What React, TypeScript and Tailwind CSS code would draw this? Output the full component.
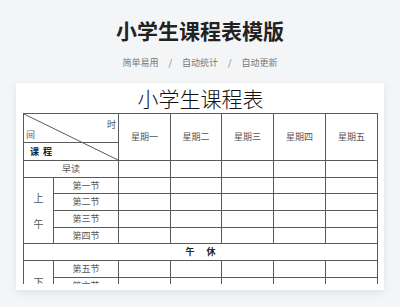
const days = ['星期一', '星期二', '星期三', '星期四', '星期五']

const Blank = () => (
  <>
    {days.map((d) => (
      <div key={d} className="border-r border-b border-[#5a5a5a]" />
    ))}
  </>
)

const App = () => {
  const morning = ['第一节', '第二节', '第三节', '第四节']
  const afternoon = ['第五节', '第六节']

  return (
    <div
      className="w-[400px] h-[307px] overflow-hidden bg-[#f4f5f7] flex flex-col items-center"
      style={{ fontFamily: '"Noto Sans CJK SC", "Noto Sans", sans-serif' }}
    >
      <h1 className="mt-[19px] text-[21px] leading-[22px] font-bold text-[#222]">
        小学生课程表模版
      </h1>
      <div className="mt-[17px] flex items-center gap-[10px] text-[9px] leading-[9px] text-[#777]">
        <span>简单易用</span>
        <span>/</span>
        <span>自动统计</span>
        <span>/</span>
        <span>自动更新</span>
      </div>

      {/* card */}
      <div className="mt-[16px] w-[368px] bg-white pl-[7px] pr-[6px] pb-[6px] shadow-[0_3px_8px_rgba(0,0,0,0.08)]">
        <div className="h-[201px] overflow-hidden">
          <div className="pt-[4px] h-[30px] text-center text-[21px] leading-[22px] text-[#111] font-light">
            小学生课程表
          </div>

          <div className="grid grid-cols-[30px_65px_52px_51px_52px_52px_52px] grid-rows-[47px_17px_16px_17px_17px_16px_17px_17px_17px_17px_17px] border-l border-t border-[#5a5a5a] text-[9px] text-[#555]">
            {/* diagonal header */}
            <div className="col-span-2 relative flex flex-col border-r border-b border-[#5a5a5a]">
              <svg className="absolute inset-0 w-full h-full" preserveAspectRatio="none" viewBox="0 0 100 100">
                <line x1="0" y1="0" x2="100" y2="100" stroke="#5a5a5a" strokeWidth="1" vectorEffect="non-scaling-stroke" />
              </svg>
              <div className="h-[28px] flex flex-col px-[2px]">
                <span className="self-end leading-[9px] mt-[6px]">时</span>
                <span className="leading-[9px] mt-[1px]">间</span>
              </div>
              <div className="flex-1 border-t border-[#5a5a5a] flex items-center pl-[6px] font-bold text-[#222] tracking-[4px]">
                课程
              </div>
            </div>
            {days.map((d) => (
              <div key={d} className="border-r border-b border-[#5a5a5a] flex items-center justify-center">
                {d}
              </div>
            ))}

            <div className="col-span-2 border-r border-b border-[#5a5a5a] flex items-center justify-center">早读</div>
            <Blank />

            <div className="row-span-4 border-r border-b border-[#5a5a5a] flex flex-col items-center justify-center gap-[11px] text-[10px]">
              <span>上</span>
              <span>午</span>
            </div>
            {morning.map((m) => (
              <div key={m} className="contents">
                <div className="border-r border-b border-[#5a5a5a] flex items-center justify-center">{m}</div>
                <Blank />
              </div>
            ))}

            <div className="col-span-7 border-r border-b border-[#5a5a5a] flex items-center justify-center font-bold text-[#222] tracking-[12px] pl-[12px]">
              午休
            </div>

            <div className="row-span-4 border-r border-b border-[#5a5a5a] flex flex-col items-center justify-center gap-[11px] text-[10px]">
              <span>下</span>
              <span>午</span>
            </div>
            {afternoon.map((m) => (
              <div key={m} className="contents">
                <div className="border-r border-b border-[#5a5a5a] flex items-center justify-center">{m}</div>
                <Blank />
              </div>
            ))}
          </div>
        </div>
      </div>
    </div>
  )
}

export default App
